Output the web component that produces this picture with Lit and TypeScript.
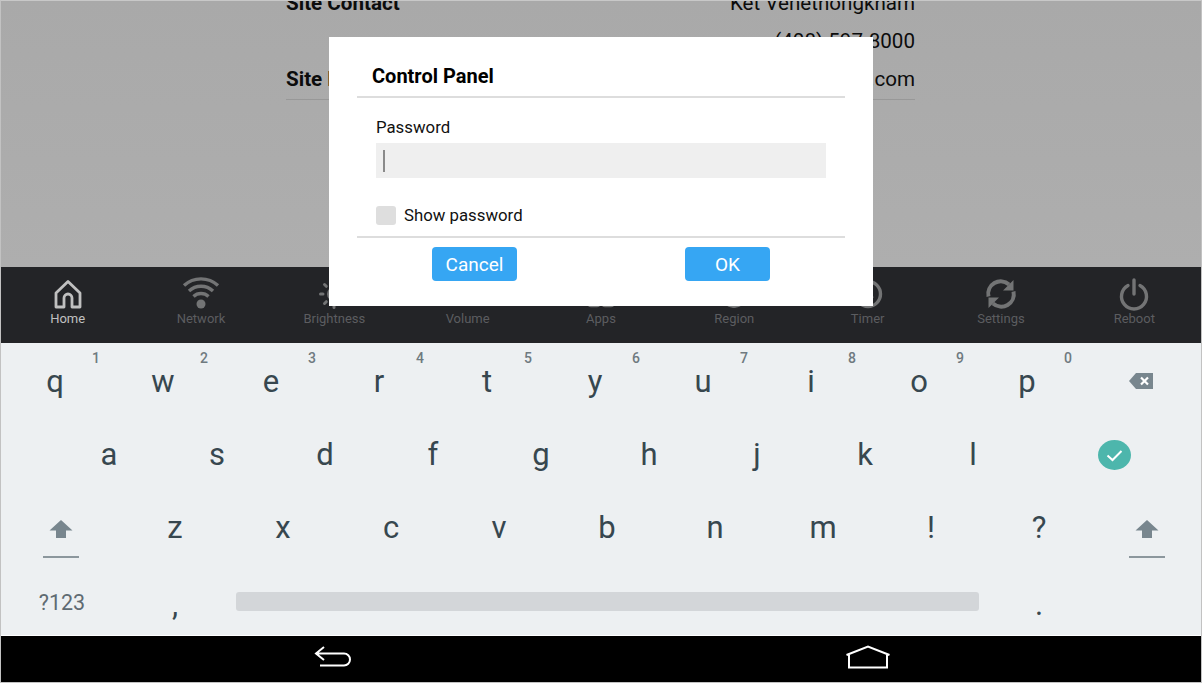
import { LitElement, html, css, svg } from 'lit';
import { customElement } from 'lit/decorators.js';

const NAV_ICONS: Record<string, unknown> = {
  Home: svg`<path d="M4 29V15L16 3.500 28 15v14h-8v-9a4 4 0 0 0-8 0v9z" fill="none" stroke="currentColor" stroke-width="2.800" stroke-linejoin="round"/>`,
  Network: svg`<circle cx="16" cy="26" r="4.500" fill="currentColor"/>
    <g fill="none" stroke="currentColor" stroke-width="3.400">
      <path d="M8.500 18.500a11 11 0 0 1 15 0"/><path d="M4 13a17.500 17.500 0 0 1 24 0"/><path d="M-1 7.500a25 25 0 0 1 34 0"/>
    </g>`,
  Brightness: svg`<circle cx="16" cy="16" r="7" fill="currentColor"/>
    <g stroke="currentColor" stroke-width="3" stroke-linecap="round">
      <path d="M16 2.500v2.500M16 27v2.500M2.500 16H5M27 16h2.500M6.500 6.500l1.800 1.800M23.700 23.700l1.800 1.800M6.500 25.500l1.800-1.800M23.700 8.300l1.800-1.800"/>
    </g>`,
  Volume: svg`<path d="M4 12v8h6l8 7V5l-8 7z" fill="currentColor"/><path d="M22 11a7 7 0 0 1 0 10" fill="none" stroke="currentColor" stroke-width="2.600"/>`,
  Apps: svg`<g fill="none" stroke="currentColor" stroke-width="2.600">
      <rect x="4" y="4" width="10" height="10" rx="2"/><rect x="18" y="4" width="10" height="10" rx="2"/>
      <rect x="4" y="18" width="10" height="10" rx="2"/><rect x="18" y="18" width="10" height="10" rx="2"/>
    </g>`,
  Region: svg`<g fill="none" stroke="currentColor" stroke-width="2.600">
      <circle cx="16" cy="16" r="12.500"/><ellipse cx="16" cy="16" rx="5.500" ry="12.500"/><path d="M4 16h24"/>
    </g>`,
  Timer: svg`<circle cx="16" cy="16" r="12.500" fill="none" stroke="currentColor" stroke-width="3.400"/>
    <path d="M16 8v8l5 4" fill="none" stroke="currentColor" stroke-width="2.600"/>`,
  Settings: svg`<g fill="none" stroke="currentColor" stroke-width="4">
      <path d="M3.500 18.500A12.500 12.500 0 0 1 24 6.500"/><path d="M28.500 13.500A12.500 12.500 0 0 1 8 25.500"/>
    </g>
    <path d="M28.500 2v10.500H18zM3.500 30V19.500H14z" fill="currentColor"/>`,
  Reboot: svg`<path d="M10 7.500a12.500 12.500 0 1 0 12 0" fill="none" stroke="currentColor" stroke-width="3.400" stroke-linecap="round"/>
    <path d="M16 2v14" fill="none" stroke="currentColor" stroke-width="3.400" stroke-linecap="round"/>`,
};

const NAV_ITEMS = ['Home', 'Network', 'Brightness', 'Volume', 'Apps', 'Region', 'Timer', 'Settings', 'Reboot'];
const ROW_ONE = 'qwertyuiop'.split('');
const ROW_TWO = 'asdfghjkl'.split('');
const ROW_THREE = ['z', 'x', 'c', 'v', 'b', 'n', 'm', '!', '?'];

const shiftIcon = html`<svg viewBox="0 0 24 18" width="24" height="18">
  <path d="M12 0l11.500 10.500H17V18H7v-7.500H0.500z" fill="currentColor"/>
</svg>`;

@customElement('app-root')
export class AppRoot extends LitElement {
  static styles = css`
    :host {
      display: block;
      width: 1202px;
      height: 683px;
      font-family: Roboto, 'Liberation Sans', sans-serif;
    }

    .screen {
      position: relative;
      box-sizing: border-box;
      width: 1202px;
      height: 683px;
      display: flex;
      flex-direction: column;
      border: 1px solid #c2c2c2;
      border-top-color: #c8c8c8;
      overflow: hidden;
    }

    /* page behind the dialog, scrolled so that the first row is cut off */
    .page {
      height: 266px;
      flex: none;
      overflow: hidden;
      background: linear-gradient(#a9a9a9, #aeaeae);
      padding-left: 285px;
    }

    .rows {
      width: 629px;
      margin-top: -17px;
      padding-bottom: 1px;
      border-bottom: 1px solid #989898;
      color: #0c0c0c;
      font-size: 20.6px;
    }

    .row {
      height: 38px;
      display: flex;
      justify-content: space-between;
      align-items: center;
    }

    .row b {
      font-weight: 700;
    }

    .nav {
      height: 76px;
      flex: none;
      display: flex;
      background: #232427;
    }

    .nav-item {
      flex: 1;
      display: flex;
      flex-direction: column;
      align-items: center;
      padding-top: 11px;
      font-size: 13px;
      line-height: 16px;
      color: #5c5d60;
    }

    .nav-item svg {
      color: #737475;
      margin-bottom: 1px;
      overflow: visible;
    }

    .nav-item.active,
    .nav-item.active svg {
      color: #c0c0c0;
    }

    .keyboard {
      height: 292px;
      flex: none;
      background: #edf0f2;
      color: #37474f;
      font-size: 31px;
    }

    .key-row {
      height: 73px;
      display: flex;
    }

    .key-row.indent {
      padding-left: 54px;
    }

    .key {
      position: relative;
      width: 108px;
      flex: none;
      display: flex;
      align-items: center;
      justify-content: center;
      padding-top: 3px;
      box-sizing: border-box;
    }

    .key.wide {
      width: 120px;
    }

    .key.enter {
      width: 174px;
      padding-top: 4px;
    }

    .backspace {
      margin: 0 0 0 12px;
    }

    .hint {
      position: absolute;
      top: 7px;
      right: 9px;
      font-size: 14px;
      line-height: 16px;
      font-weight: 500;
      color: #6f7a80;
    }

    .shift-key {
      flex-direction: column;
      gap: 18px;
      padding-top: 27px;
      color: #78868e;
    }

    .shift-key i {
      display: block;
      width: 36px;
      height: 2px;
      background: #8c979d;
    }

    .fn {
      font-size: 21.5px;
      color: #5f6b72;
      padding: 8px 0 0 2px;
    }

    .punct {
      padding-top: 12px;
    }

    .space {
      width: 756px;
      flex: none;
      box-sizing: border-box;
      display: flex;
      align-items: center;
      padding: 6px 6px 0 7px;
    }

    .space i {
      display: block;
      width: 100%;
      height: 19px;
      border-radius: 3px;
      background: #d3d6d9;
    }

    .system {
      flex: 1;
      background: #000;
      border-top: 1px solid #fff;
      display: flex;
      align-items: center;
      padding: 0 0 4px 313px;
      gap: 493px;
    }

    .dialog {
      position: absolute;
      left: 328px;
      top: 36px;
      width: 544px;
      height: 269px;
      box-sizing: border-box;
      background: #fff;
      padding: 0 28px;
      color: #111;
    }

    .dialog h1 {
      margin: 0;
      height: 61px;
      box-sizing: border-box;
      padding: 26px 0 0 15px;
      font-size: 20px;
      line-height: 26px;
      font-weight: 700;
      color: #000;
      border-bottom: 2px solid #ddd;
    }

    .body {
      height: 140px;
      box-sizing: border-box;
      padding: 18px 19px 0;
      border-bottom: 2px solid #ddd;
    }

    .label {
      font-size: 16.8px;
      line-height: 22px;
    }

    .input {
      height: 35px;
      margin-top: 5px;
      background: #efefef;
      display: flex;
      align-items: center;
      padding-left: 7px;
    }

    .caret {
      width: 2px;
      height: 22px;
      background: #8a8a8a;
    }

    .check {
      display: flex;
      align-items: center;
      gap: 8px;
      margin-top: 27px;
      font-size: 16.8px;
    }

    .box {
      width: 20px;
      height: 19px;
      border-radius: 3px;
      background: #dedede;
    }

    .actions {
      display: flex;
      gap: 168px;
      padding: 9px 0 0 75px;
    }

    .btn {
      width: 85px;
      height: 34px;
      border-radius: 4px;
      background: #36a6f3;
      color: #fff;
      font-size: 19px;
      display: flex;
      align-items: center;
      justify-content: center;
    }
  `;

  render() {
    return html`
      <div class="screen">
        <div class="page">
          <div class="rows">
            <div class="row"><b>Site Contact</b><span>Ket Venethongkham</span></div>
            <div class="row"><span></span><span>(408) 597-8000</span></div>
            <div class="row"><b>Site Email</b><span>support@example.com</span></div>
          </div>
        </div>

        <div class="nav">
          ${NAV_ITEMS.map(
            (name, i) => html`<div class="nav-item ${i === 0 ? 'active' : ''}">
              <svg viewBox="0 0 32 32" width="32" height="32">${NAV_ICONS[name]}</svg>
              <span>${name}</span>
            </div>`
          )}
        </div>

        <div class="keyboard">
          <div class="key-row">
            ${ROW_ONE.map(
              (k, i) => html`<div class="key">${k}<span class="hint">${(i + 1) % 10}</span></div>`
            )}
            <div class="key">
              <svg class="backspace" viewBox="0 0 24 16" width="24" height="16">
                <path d="M7 0h17v16H7L0 8z" fill="#78868e"/>
                <path d="M12 4.500l7 7M19 4.500l-7 7" stroke="#fff" stroke-width="2.200"/>
              </svg>
            </div>
          </div>
          <div class="key-row indent">
            ${ROW_TWO.map((k) => html`<div class="key">${k}</div>`)}
            <div class="key enter">
              <svg viewBox="0 0 33 30" width="33" height="30">
                <ellipse cx="16.500" cy="15" rx="16.500" ry="15" fill="#4db6ac"/>
                <path d="M9.500 15.500l5 4.500 9-9" fill="none" stroke="#fff" stroke-width="2"/>
              </svg>
            </div>
          </div>
          <div class="key-row">
            <div class="key wide shift-key">${shiftIcon}<i></i></div>
            ${ROW_THREE.map((k) => html`<div class="key">${k}</div>`)}
            <div class="key shift-key">${shiftIcon}<i></i></div>
          </div>
          <div class="key-row">
            <div class="key wide fn">?123</div>
            <div class="key punct">,</div>
            <div class="space"><i></i></div>
            <div class="key punct">.</div>
          </div>
        </div>

        <div class="system">
          <svg viewBox="0 0 38 24" width="38" height="24">
            <path d="M10 2L2 8.500l8 6.500M2 8.500h28a5.500 5.500 0 0 1 0 12H6" fill="none" stroke="#fff" stroke-width="2"/>
          </svg>
          <svg viewBox="0 0 46 24" width="46" height="24">
            <path d="M1.500 10L23 1.500 44.500 10M4 9.500V22.500H42V9.500" fill="none" stroke="#fff" stroke-width="2"/>
          </svg>
        </div>

        <div class="dialog">
          <h1>Control Panel</h1>
          <div class="body">
            <div class="label">Password</div>
            <div class="input"><div class="caret"></div></div>
            <div class="check"><div class="box"></div>Show password</div>
          </div>
          <div class="actions">
            <div class="btn">Cancel</div>
            <div class="btn">OK</div>
          </div>
        </div>
      </div>
    `;
  }
}
